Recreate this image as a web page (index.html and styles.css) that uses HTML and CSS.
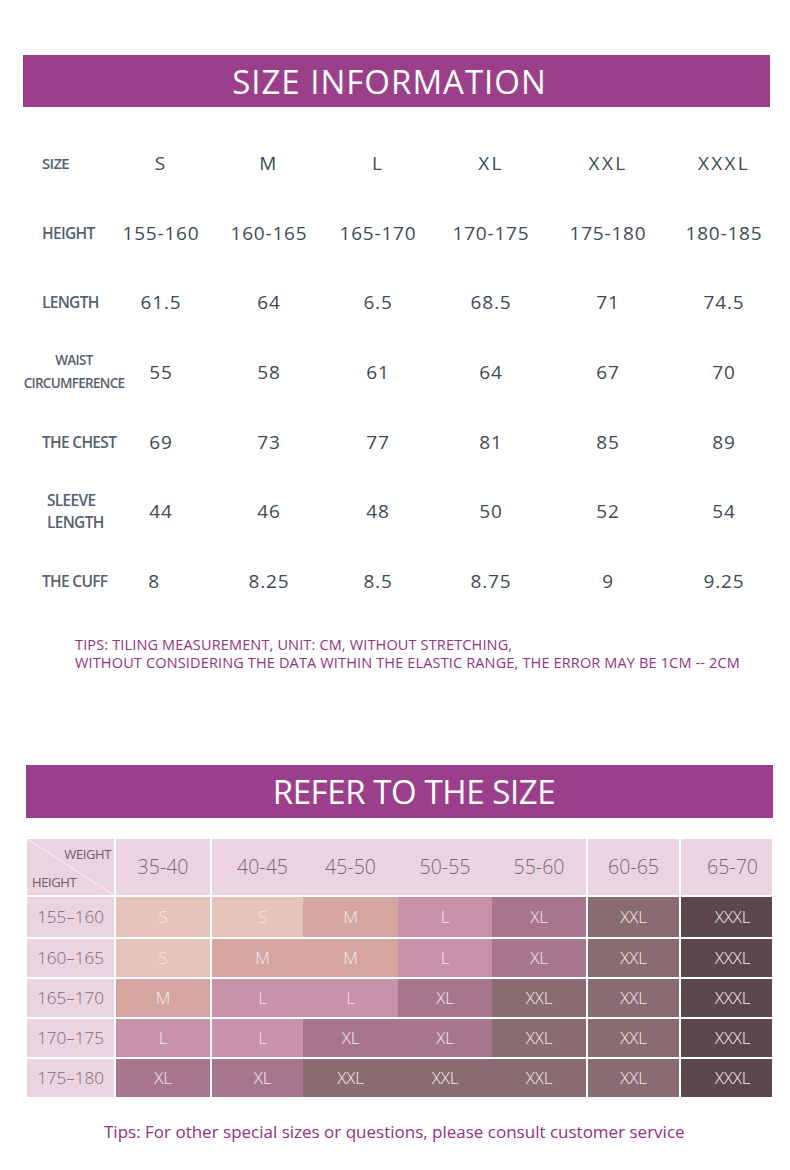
FILE: index.html
```html
<!DOCTYPE html>
<html>
<head>
<meta charset="utf-8">
<link rel="stylesheet" href="styles.css">
</head>
<body>
<div class="page">
  <section class="info">
    <div class="banner banner-1"><h1 class="banner-title t1">SIZE INFORMATION</h1></div>
    <div class="spec">
      <div class="spec-row">
        <div class="lbl lbl-size">SIZE</div>
        <div class="v sz">S</div><div class="v sz">M</div><div class="v sz">L</div><div class="v sz">XL</div><div class="v sz">XXL</div><div class="v sz">XXXL</div>
      </div>
      <div class="spec-row">
        <div class="lbl">HEIGHT</div>
        <div class="v">155-160</div><div class="v">160-165</div><div class="v">165-170</div><div class="v">170-175</div><div class="v">175-180</div><div class="v">180-185</div>
      </div>
      <div class="spec-row">
        <div class="lbl">LENGTH</div>
        <div class="v">61.5</div><div class="v">64</div><div class="v">6.5</div><div class="v">68.5</div><div class="v">71</div><div class="v">74.5</div>
      </div>
      <div class="spec-row">
        <div class="lbl lbl-waist"><span>WAIST</span><span>CIRCUMFERENCE</span></div>
        <div class="v">55</div><div class="v">58</div><div class="v">61</div><div class="v">64</div><div class="v">67</div><div class="v">70</div>
      </div>
      <div class="spec-row">
        <div class="lbl">THE CHEST</div>
        <div class="v">69</div><div class="v">73</div><div class="v">77</div><div class="v">81</div><div class="v">85</div><div class="v">89</div>
      </div>
      <div class="spec-row">
        <div class="lbl lbl-sleeve"><span>SLEEVE</span><span>LENGTH</span></div>
        <div class="v">44</div><div class="v">46</div><div class="v">48</div><div class="v">50</div><div class="v">52</div><div class="v">54</div>
      </div>
      <div class="spec-row">
        <div class="lbl">THE CUFF</div>
        <div class="v v-left">8</div><div class="v">8.25</div><div class="v">8.5</div><div class="v">8.75</div><div class="v">9</div><div class="v">9.25</div>
      </div>
    </div>
    <p class="tips">TIPS: TILING MEASUREMENT, UNIT: CM, WITHOUT STRETCHING,<br>WITHOUT CONSIDERING THE DATA WITHIN THE ELASTIC RANGE, THE ERROR MAY BE 1CM -- 2CM</p>
  </section>

  <section class="refer">
    <div class="banner banner-2"><h2 class="banner-title t2">REFER TO THE SIZE</h2></div>
    <div class="chart">
      <div class="chart-row chart-head">
        <div class="corner"><span class="corner-w">WEIGHT</span><span class="corner-h">HEIGHT</span></div>
        <div class="hd">35-40</div><div class="hd">40-45</div><div class="hd">45-50</div><div class="hd">50-55</div><div class="hd">55-60</div><div class="hd">60-65</div><div class="hd">65-70</div>
      </div>
      <div class="chart-row first">
        <div class="hcell">155–160</div>
        <div class="c s">S</div><div class="c s">S</div><div class="c m">M</div><div class="c l">L</div><div class="c xl">XL</div><div class="c xxl">XXL</div><div class="c xxxl">XXXL</div>
      </div>
      <div class="chart-row">
        <div class="hcell">160–165</div>
        <div class="c s">S</div><div class="c m">M</div><div class="c m">M</div><div class="c l">L</div><div class="c xl">XL</div><div class="c xxl">XXL</div><div class="c xxxl">XXXL</div>
      </div>
      <div class="chart-row">
        <div class="hcell">165–170</div>
        <div class="c m">M</div><div class="c l">L</div><div class="c l">L</div><div class="c xl">XL</div><div class="c xxl">XXL</div><div class="c xxl">XXL</div><div class="c xxxl">XXXL</div>
      </div>
      <div class="chart-row">
        <div class="hcell">170–175</div>
        <div class="c l">L</div><div class="c l">L</div><div class="c xl">XL</div><div class="c xl">XL</div><div class="c xxl">XXL</div><div class="c xxl">XXL</div><div class="c xxxl">XXXL</div>
      </div>
      <div class="chart-row">
        <div class="hcell">175–180</div>
        <div class="c xl">XL</div><div class="c xl">XL</div><div class="c xxl">XXL</div><div class="c xxl">XXL</div><div class="c xxl">XXL</div><div class="c xxl">XXL</div><div class="c xxxl">XXXL</div>
      </div>
    </div>
    <p class="foot">Tips: For other special sizes or questions, please consult customer service</p>
  </section>
</div>
</body>
</html>
```

FILE: styles.css
```css
* { box-sizing: border-box; }
html, body { margin: 0; padding: 0; background: #ffffff; }
body { font-family: "Open Sans", "Noto Sans", sans-serif; color: #46525d; width: 790px; }
.page { width: 790px; overflow: hidden; }

.banner {
  background: #9c3f8b;
  display: flex;
  align-items: center;
  justify-content: center;
}
.banner-title {
  margin: 0;
  color: #ffffff;
  font-weight: 400;
  font-size: 33px;
  line-height: 1;
}
.banner-1 { margin: 55px 0 0 23px; width: 747px; height: 52px; padding-right: 14px; }
.t1 { letter-spacing: 1px; }
.t2 { letter-spacing: -0.4px; }
.banner-2 { margin: 0 0 0 26px; width: 747px; height: 53px; padding-left: 29px; }

.spec { margin-top: 21px; }
.spec-row {
  display: grid;
  grid-template-columns: 108px 106px 110px 108px 118px 116px 116px;
  height: 69.7px;
  align-items: center;
}
.lbl {
  padding-left: 42px;
  font-size: 15.5px;
  font-weight: 600;
  letter-spacing: -0.7px;
  white-space: nowrap;
  color: #56626d;
}
.lbl-size { font-size: 15px; }
.lbl-waist {
  display: flex;
  flex-direction: column;
  align-items: center;
  padding-left: 0;
  margin-left: 24px;
  width: 100px;
  font-size: 13.5px;
  line-height: 23px;
  letter-spacing: -0.7px;
}
.lbl-sleeve {
  display: flex;
  flex-direction: column;
  padding-left: 47px;
  line-height: 22px;
}
.v {
  text-align: center;
  font-size: 19px;
  font-weight: 400;
  letter-spacing: 0.8px;
  white-space: nowrap;
  color: #3e4a55;
}
.sz { letter-spacing: 2.3px; }
.v-left { padding-right: 14px; }

.tips {
  margin: 20px 0 0 75px;
  font-size: 14.5px;
  font-weight: 400;
  line-height: 18px;
  color: #94337f;
  letter-spacing: 0.15px;
  white-space: nowrap;
}

.refer { margin-top: 93px; }

.chart {
  margin: 21px 0 0 27px;
  width: 745px;
  display: flex;
  flex-direction: column;
  gap: 2px;
}
.chart-row {
  display: grid;
  grid-template-columns: 87px 96px 93px 95px 94px 94px 93px 93px;
  height: 38px;
}
.chart-row.first { height: 40px; }
.chart-head { height: 56px; }
.chart-row > :nth-child(2),
.chart-row > :nth-child(3),
.chart-row > :nth-child(7),
.chart-row > :nth-child(8) { border-left: 2px solid #ffffff; }
.chart-row > :nth-child(3) { padding-left: 10px; }
.chart-row > :nth-child(8) { padding-left: 12px; }

.corner {
  position: relative;
  background-color: #ecd3e1;
  background-image: linear-gradient(to top right, transparent calc(50% - 1px), #f8eef3 50%, transparent calc(50% + 1px));
  font-size: 13px;
  color: #6e5e66;
  letter-spacing: -0.4px;
}
.corner-w { position: absolute; right: 3px; top: 6px; }
.corner-h { position: absolute; left: 5px; bottom: 4px; }

.hd {
  background: #ecd3e1;
  display: flex;
  align-items: center;
  justify-content: center;
  font-size: 19.5px;
  font-weight: 300;
  color: #776870;
}
.hcell {
  background: #ecd3e1;
  display: flex;
  align-items: center;
  justify-content: center;
  font-size: 17px;
  font-weight: 300;
  color: #7a6a71;
}
.c {
  display: flex;
  align-items: center;
  justify-content: center;
  font-size: 17px;
  font-weight: 300;
  color: #f6eaee;
  letter-spacing: -0.2px;
}
.s { background: #e6c4bb; color: #f8e9e3; }
.m { background: #d4a69f; }
.l { background: #c892aa; }
.xl { background: #a8768c; }
.xxl { background: #886c72; }
.xxxl { background: #5e474c; }

.foot {
  margin: 24px 0 0 104px;
  font-size: 17px;
  line-height: 22px;
  color: #93307f;
  white-space: nowrap;
}
```
